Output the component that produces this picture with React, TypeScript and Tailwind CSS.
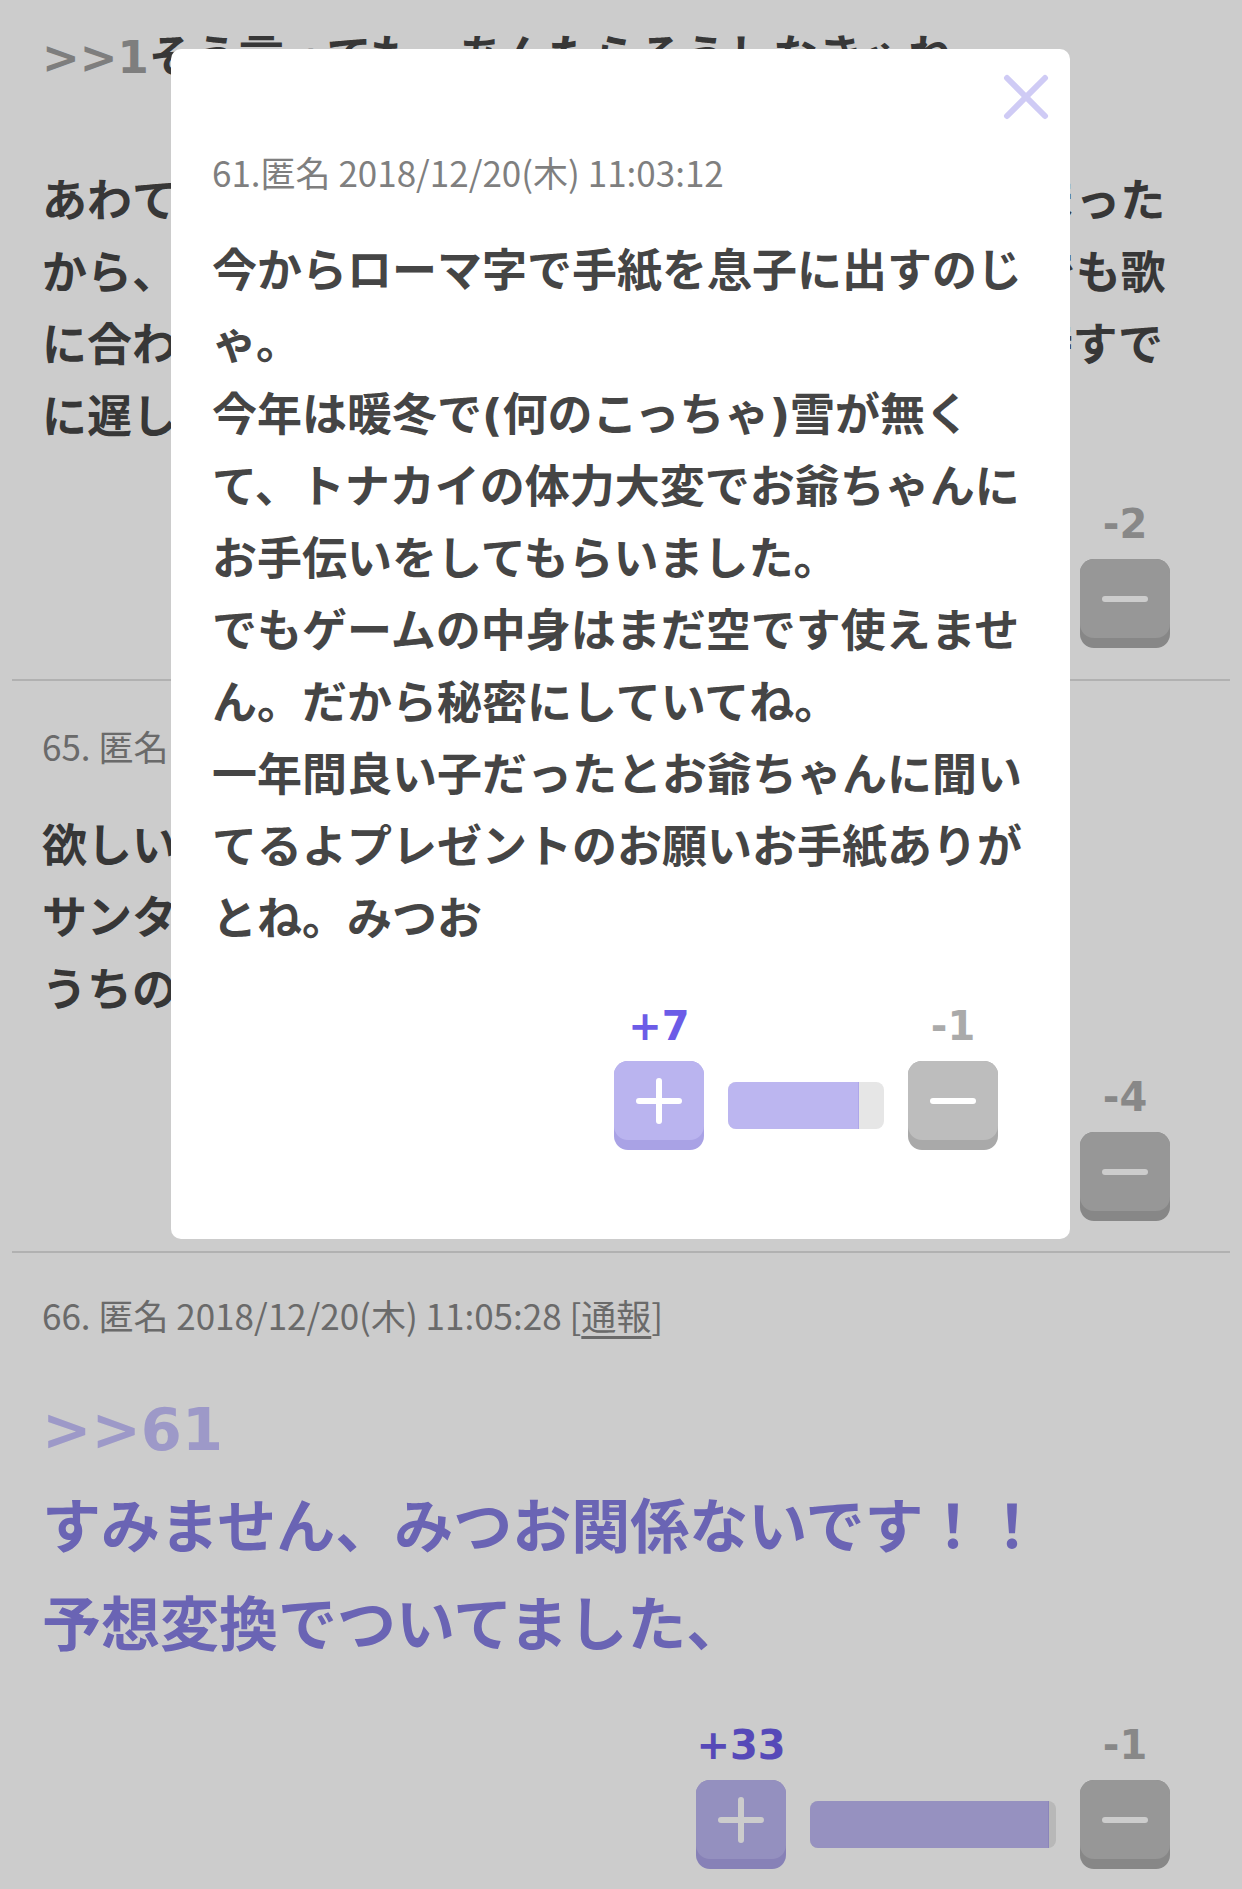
import React from "react";

type VoteProps = {
  plus: string;
  minus: string;
  fill: number;
  barClass: string;
  mrClass: string;
};

function PlusIcon() {
  return (
    <svg width="46" height="46" viewBox="0 0 46 46">
      <line x1="23" y1="3" x2="23" y2="43" stroke="#ffffff" strokeWidth="6" strokeLinecap="round" />
      <line x1="3" y1="23" x2="43" y2="23" stroke="#ffffff" strokeWidth="6" strokeLinecap="round" />
    </svg>
  );
}

function MinusIcon() {
  return (
    <svg width="46" height="10" viewBox="0 0 46 10">
      <line x1="3" y1="5" x2="43" y2="5" stroke="#ffffff" strokeWidth="6" strokeLinecap="round" />
    </svg>
  );
}

function Vote({ plus, minus, fill, barClass, mrClass }: VoteProps) {
  return (
    <div className={`flex justify-end mt-[45px] ${mrClass}`}>
      <div className="flex items-end">
        <div className="flex flex-col items-center w-[90px]">
          <div className="h-[50px] leading-[50px] text-[40px] font-bold text-[#6c5ce7] font-['DejaVu_Sans',sans-serif] whitespace-nowrap">
            {plus}
          </div>
          <div className="mt-[10px] w-[90px] h-[89px] rounded-[14px] bg-[#a9a2e5]">
            <div className="h-[79px] rounded-[14px] bg-[#bab4ef] flex items-center justify-center">
              <PlusIcon />
            </div>
          </div>
        </div>
        <div className={`mx-[24px] mb-[21px] h-[47px] rounded-[8px] bg-[#e6e6e6] overflow-hidden flex ${barClass}`}>
          <div className="h-full bg-[#bcb6f0] border-r border-[#aea7ea]" style={{ width: `${fill}%` }} />
        </div>
        <div className="flex flex-col items-center w-[90px]">
          <div className="h-[50px] leading-[50px] text-[40px] font-bold text-[#aaaaaa] font-['DejaVu_Sans',sans-serif] whitespace-nowrap">
            {minus}
          </div>
          <div className="mt-[10px] w-[90px] h-[89px] rounded-[14px] bg-[#a9a9a9]">
            <div className="h-[79px] rounded-[14px] bg-[#bdbdbd] flex items-center justify-center">
              <MinusIcon />
            </div>
          </div>
        </div>
      </div>
    </div>
  );
}

function Divider() {
  return <div className="mx-[12px] h-[2px] bg-[#dedede]" />;
}

function Header({ children }: { children: React.ReactNode }) {
  return (
    <div className="h-[54px] leading-[54px] text-[35px] font-normal text-[#858585] font-['Noto_Sans_CJK_JP',sans-serif] whitespace-nowrap">
      {children}
    </div>
  );
}

const body =
  "text-[45px] leading-[72px] font-bold text-[#454545] font-['DejaVu_Sans','Noto_Sans_CJK_JP',sans-serif] whitespace-nowrap";

export default function App() {
  const modalLines = [
    "今からローマ字で手紙を息子に出すのじ",
    "ゃ。",
    "今年は暖冬で(何のこっちゃ)雪が無く",
    "て、トナカイの体力大変でお爺ちゃんに",
    "お手伝いをしてもらいました。",
    "でもゲームの中身はまだ空です使えませ",
    "ん。だから秘密にしていてね。",
    "一年間良い子だったとお爺ちゃんに聞い",
    "てるよプレゼントのお願いお手紙ありが",
    "とね。みつお",
  ];

  return (
    <div className="relative w-[1242px] h-[1889px] overflow-hidden bg-white">
      <div className="pt-[22px]">
        {/* post 64 (partial) */}
        <div className="px-[42px] pb-[31px]">
          <div className={body}>
            <div>
              <span className="text-[#9e9e9e]">&gt;&gt;1</span>そう言っても、あんたらそうしなきゃね
            </div>
            <div>&nbsp;</div>
            <div>あわててプレゼント買いに行ったけど売り切れしまった</div>
            <div>から、仕方なく別のおもちゃにしたら子供がそれでも歌</div>
            <div>に合わせて踊ってて、本当の物に交換しようにも時すで</div>
            <div>に遅しでした。</div>
          </div>
          <Vote plus="+5" minus="-2" fill={71} barClass="w-[246px]" mrClass="mr-[30px]" />
        </div>
        <Divider />

        {/* post 65 */}
        <div className="px-[42px] pt-[38px] pb-[30px]">
          <Header>65. 匿名 2018/12/20(木) 11:04:51 [通報]</Header>
          <div className={`${body} mt-[38px]`}>
            <div>欲しいものを手紙に書いて置いておいたら</div>
            <div>サンタさんから返事が来ました！</div>
            <div>うちの子も大喜びです。</div>
          </div>
          <Vote plus="+9" minus="-4" fill={69} barClass="w-[246px]" mrClass="mr-[30px]" />
        </div>
        <Divider />

        {/* post 66 */}
        <div className="px-[42px] pt-[35px]">
          <Header>
            66. 匿名 2018/12/20(木) 11:05:28 [<span className="underline underline-offset-[6px]">通報</span>]
          </Header>
          <div className="mt-[39px] text-[59px] leading-[98px] font-bold text-[#857de1] font-['DejaVu_Sans','Noto_Sans_CJK_JP',sans-serif] whitespace-nowrap">
            <div className="text-[#c5c0fa]">&gt;&gt;61</div>
            <div>すみません、みつお関係ないです！！</div>
            <div>予想変換でついてました、</div>
          </div>
          <Vote plus="+33" minus="-1" fill={97} barClass="w-[246px]" mrClass="mr-[30px]" />
        </div>
      </div>

      {/* dim overlay */}
      <div className="absolute inset-0 bg-black/20" />

      {/* modal */}
      <div className="absolute left-[171px] top-[49px] w-[899px] rounded-[10px] bg-white pl-[41px] pr-[45px] pt-[96px] pb-[89px]">
        <button className="absolute right-[21px] top-[25px] w-[46px] h-[46px]" aria-label="close">
          <svg width="46" height="46" viewBox="0 0 46 46">
            <line x1="4" y1="4" x2="42" y2="42" stroke="#cfcbf5" strokeWidth="6" strokeLinecap="round" />
            <line x1="42" y1="4" x2="4" y2="42" stroke="#cfcbf5" strokeWidth="6" strokeLinecap="round" />
          </svg>
        </button>
        <div className="h-[54px] leading-[54px] text-[35px] font-normal text-[#7f7f7f] font-['Noto_Sans_CJK_JP',sans-serif] whitespace-nowrap">
          61.匿名 2018/12/20(木) 11:03:12
        </div>
        <div className={`${body} mt-[37px]`}>
          {modalLines.map((l, i) => (
            <div key={i}>{l}</div>
          ))}
        </div>
        <Vote plus="+7" minus="-1" fill={84} barClass="w-[156px]" mrClass="mr-[27px]" />
      </div>
    </div>
  );
}
